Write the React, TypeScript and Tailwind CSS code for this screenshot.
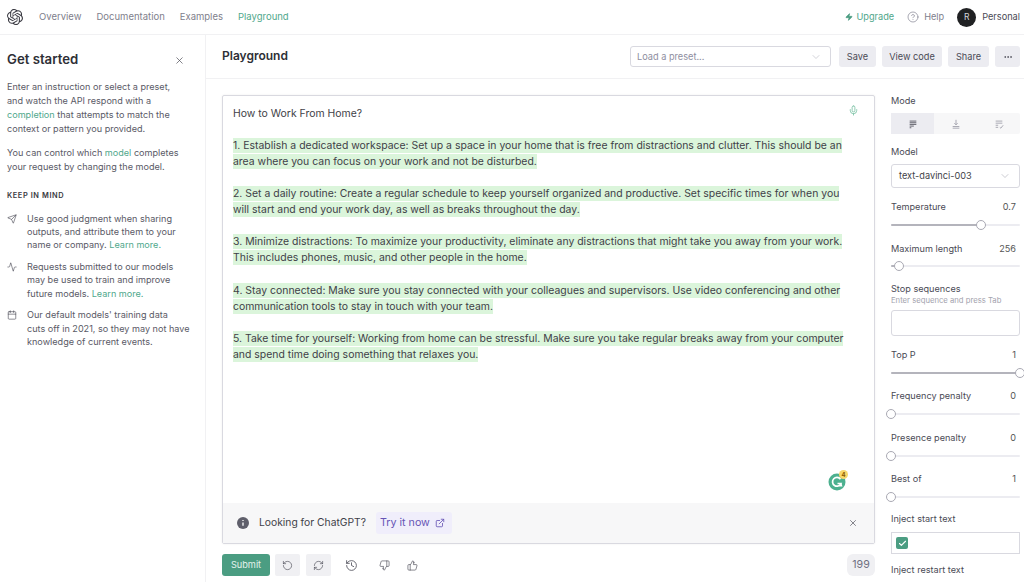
import React from "react";
import { X, Send, Activity, Calendar, ChevronDown, Mic, ExternalLink, RotateCcw, RefreshCw, History, ThumbsDown, ThumbsUp, Zap, CircleHelp, MoreHorizontal, Check } from "lucide-react";
import { SiOpenai } from "react-icons/si";

const paragraphs: string[][] = [
  ["1. Establish a dedicated workspace: Set up a space in your home that is free from distractions and clutter. This should be an", "area where you can focus on your work and not be disturbed."],
  ["2. Set a daily routine: Create a regular schedule to keep yourself organized and productive. Set specific times for when you", "will start and end your work day, as well as breaks throughout the day."],
  ["3. Minimize distractions: To maximize your productivity, eliminate any distractions that might take you away from your work.", "This includes phones, music, and other people in the home."],
  ["4. Stay connected: Make sure you stay connected with your colleagues and supervisors. Use video conferencing and other", "communication tools to stay in touch with your team."],
  ["5. Take time for yourself: Working from home can be stressful. Make sure you take regular breaks away from your computer", "and spend time doing something that relaxes you."],
];

function Slider({ label, value, pct }: { label: string; value: string; pct: number }) {
  return (
    <div className="h-[41.4px] shrink-0">
      <div className="flex justify-between h-[14px] items-center text-[9.15px] text-[#4a4a55]">
        <span>{label}</span>
        <span className="pr-[4px] text-[#555]">{value}</span>
      </div>
      <div className="relative h-[2px] mt-[10px] bg-[#ececf1] rounded-full">
        <div className="h-full bg-[#b4b4bc] rounded-full" style={{ width: `${pct}%` }} />
        <div className="absolute top-[-4px] w-[10px] h-[10px] rounded-full bg-white border border-[#a9a9b3]" style={{ left: `calc(${pct}% - 5px)` }} />
      </div>
    </div>
  );
}

function Bullet({ icon, children }: { icon: React.ReactNode; children: React.ReactNode }) {
  return (
    <div className="flex gap-[11px] mb-[8px]">
      <div className="w-[8px] pt-[2px] shrink-0 ml-[1px] text-[#4a4a55] -translate-x-[1px]">{icon}</div>
      <p className="text-[9.1px] leading-[13.4px] text-[#5a5a66] w-[168px]">{children}</p>
    </div>
  );
}

export default function App() {
  return (
    <div className="w-[1024px] h-[582px] overflow-hidden bg-white flex flex-col font-['Inter',sans-serif] text-[#353740]">
      <header className="h-[35px] shrink-0 border-b border-[#f1f1f3] flex items-center pl-[7px] pr-[4px]">
        <SiOpenai className="w-[16px] h-[16px] text-[#3a3a42]" />
        <nav className="flex gap-[15px] ml-[16px] text-[9.5px] text-[#80808c]">
          <span>Overview</span>
          <span>Documentation</span>
          <span>Examples</span>
          <span className="text-[#50a88c]">Playground</span>
        </nav>
        <div className="ml-auto flex items-center text-[9.2px]">
          <Zap className="w-[8px] h-[8px] text-[#4b9d82] fill-[#4b9d82]" />
          <span className="ml-[3px] text-[#4fa68a]">Upgrade</span>
          <CircleHelp strokeWidth={1.2} className="ml-[13px] w-[12px] h-[12px] text-[#6e6e80]" />
          <span className="ml-[5px] text-[#80808c]">Help</span>
          <div className="ml-[13px] w-[19px] h-[19px] rounded-full bg-[#202123] text-[#d5d5da] flex items-center justify-center text-[8.5px]">R</div>
          <span className="ml-[6px] text-[#4a4a55]">Personal</span>
        </div>
      </header>
      <div className="flex flex-1 min-h-0">
        <aside className="w-[206px] shrink-0 border-r border-[#f1f1f3] pl-[7px] pt-[16px] pr-[6px]">
          <div className="flex items-center justify-between h-[18px] pr-[14px]">
            <h2 className="text-[13.2px] font-semibold text-[#2e2f36]">Get started</h2>
            <X strokeWidth={1.5} className="w-[11px] h-[11px] text-[#4a4a55]" />
          </div>
          <p className="mt-[11px] w-[178px] text-[9.1px] leading-[14.1px] text-[#5a5a66]">
            Enter an instruction or select a preset, and watch the API respond with a <span className="text-[#50a88c]">completion</span> that attempts to match the context or pattern you provided.
          </p>
          <p className="mt-[10px] w-[178px] text-[9.1px] leading-[14.1px] text-[#5a5a66]">
            You can control which <span className="text-[#50a88c]">model</span> completes your request by changing the model.
          </p>
          <h3 className="mt-[15px] mb-[11px] text-[7.4px] font-semibold tracking-[0.08em] text-[#3a3a42]">KEEP IN MIND</h3>
          <Bullet icon={<Send strokeWidth={1.5} className="w-[10px] h-[10px]" />}>
            Use good judgment when sharing<br />outputs, and attribute them to your<br />name or company. <span className="text-[#50a88c]">Learn more.</span>
          </Bullet>
          <Bullet icon={<Activity strokeWidth={1.5} className="w-[10px] h-[10px]" />}>
            Requests submitted to our models<br />may be used to train and improve<br />future models. <span className="text-[#50a88c]">Learn more.</span>
          </Bullet>
          <Bullet icon={<Calendar strokeWidth={1.5} className="w-[10px] h-[10px]" />}>
            Our default models' training data<br />cuts off in 2021, so they may not have<br />knowledge of current events.
          </Bullet>
        </aside>
        <main className="flex-1 min-w-0 flex flex-col">
          <div className="h-[44px] shrink-0 border-b border-[#f1f1f3] flex items-center pl-[16px] pr-[4px]">
            <h1 className="text-[12px] font-semibold text-[#2e2f36] pb-[2px]">Playground</h1>
            <div className="ml-auto w-[201px] h-[21px] border border-[#d9d9e0] rounded-[3px] flex items-center justify-between pl-[6px] pr-[8px] text-[9.2px] text-[#8e8ea0]">
              <span>Load a preset...</span>
              <ChevronDown strokeWidth={1.2} className="w-[12px] h-[12px] text-[#b5b5c0]" />
            </div>
            <div className="ml-[8px] flex gap-[6px] text-[9.2px] text-[#4a4a55]">
              <span className="w-[37px] h-[21px] bg-[#ececf1] rounded-[3px] flex items-center justify-center">Save</span>
              <span className="w-[60px] h-[21px] bg-[#ececf1] rounded-[3px] flex items-center justify-center">View code</span>
              <span className="w-[41px] h-[21px] bg-[#ececf1] rounded-[3px] flex items-center justify-center">Share</span>
              <span className="w-[25px] h-[21px] bg-[#ececf1] rounded-[3px] flex items-center justify-center"><MoreHorizontal strokeWidth={2} className="w-[10px] h-[10px]" /></span>
            </div>
          </div>
          <div className="flex-1 min-h-0 flex pl-[16px] pt-[16px]">
            <div className="w-[653px] shrink-0 flex flex-col">
              <div className="relative h-[449px] shrink-0 border border-[#d9d9e0] rounded-[2px] flex flex-col shadow-[0_0_2px_rgba(0,0,0,0.08)]">
                <div className="flex-1 pt-[10px] pl-[10px] text-[10.45px] leading-[16.03px] text-[#3f3f48]">
                  <div>How to Work From Home?</div>
                  <div className="h-[16px]" />
                  {paragraphs.map((p, i) => (
                    <div key={i} className="mb-[16.1px]">
                      {p.map((line, j) => (
                        <div key={j}><span className="bg-[#dbf5db] py-[1px]">{line}</span></div>
                      ))}
                    </div>
                  ))}
                </div>
                <Mic strokeWidth={1.5} className="absolute top-[9px] right-[15px] w-[11px] h-[11px] text-[#5fb592]" />
                <svg viewBox="0 0 18 18" className="absolute left-[605px] top-[377px] w-[18px] h-[18px]">
                  <circle cx="9" cy="9" r="8.5" fill="#4cb08f" />
                  <path d="M12.5 6.2A4.4 4.4 0 1 0 13 10.5H9.5" fill="none" stroke="#fff" strokeWidth="1.7" />
                  <path d="M11 13.5l2.5-3 1 3z" fill="#fff" />
                </svg>
                <div className="absolute left-[616px] top-[374px] w-[9px] h-[9px] rounded-full bg-[#f6d76b] flex items-center justify-center text-[#8a5a00] text-[6px] font-bold">4</div>
                <div className="h-[40px] shrink-0 bg-[#f7f7f8] flex items-center pl-[14px] pr-[16px] text-[10.3px] text-[#3f3f48]">
                  <svg viewBox="0 0 12 12" className="w-[12px] h-[12px]">
                    <circle cx="6" cy="6" r="6" fill="#5f5f6b" />
                    <path d="M6 5.4v3.4M6 3.1v1" stroke="#fff" strokeWidth="1.3" />
                  </svg>
                  <span className="ml-[10px]">Looking for ChatGPT?</span>
                  <span className="ml-[10px] h-[22px] w-[76px] rounded-[3px] bg-[#f0eefb] text-[#6654b5] text-[10.7px] flex items-center pl-[4px] gap-[5px]">
                    Try it now <ExternalLink strokeWidth={2} className="w-[10px] h-[10px]" />
                  </span>
                  <X strokeWidth={1.6} className="ml-auto w-[10px] h-[10px] text-[#4a4a55]" />
                </div>
              </div>
              <div className="flex items-center mt-[10px] h-[22px] text-[#4a4a55]">
                <span className="w-[48px] h-[22px] rounded-[3px] bg-[#4b9d82] text-[#e4f2ed] text-[9.2px] flex items-center justify-center">Submit</span>
                <span className="ml-[5px] w-[25px] h-[22px] rounded-[2px] bg-[#f0f0f3] flex items-center justify-center"><RotateCcw strokeWidth={1.4} className="w-[11px] h-[11px]" /></span>
                <span className="ml-[6px] w-[25px] h-[22px] rounded-[2px] bg-[#f0f0f3] flex items-center justify-center"><RefreshCw strokeWidth={1.4} className="w-[11px] h-[11px]" /></span>
                <History strokeWidth={1.5} className="ml-[14px] w-[13px] h-[13px]" />
                <ThumbsDown strokeWidth={1.4} className="ml-[21px] w-[11px] h-[11px]" />
                <ThumbsUp strokeWidth={1.4} className="ml-[17px] w-[11px] h-[11px]" />
                <span className="ml-auto w-[28px] h-[22px] rounded-[6px] bg-[#f0f0f3] text-[10.6px] text-[#6e6e80] flex items-center justify-center">199</span>
              </div>
            </div>
            <div className="ml-[16px] w-[129px] shrink-0 flex flex-col -mt-[1px] text-[9.15px] text-[#4a4a55]">
              <div className="h-[14px] flex items-center">Mode</div>
              <div className="mt-[5px] h-[21px] flex bg-[#f7f7f8] rounded-[2px] shrink-0">
                <span className="w-[43px] bg-[#ececf1] flex items-center justify-center"><svg viewBox="0 0 12 12" className="w-[10px] h-[10px]" fill="none" stroke="#4a4a55" strokeWidth="1"><path d="M2 2.5h8M2 4.5h8M2 6.5h8M2 8.5h5M2 10.5h2" /></svg></span>
                <span className="w-[43px] flex items-center justify-center"><svg viewBox="0 0 12 12" className="w-[10px] h-[10px]" fill="none" stroke="#9a9aa6" strokeWidth="1"><path d="M6 1v6M4 5l2 2 2-2M2 9h8M2 11h8" /></svg></span>
                <span className="w-[43px] flex items-center justify-center"><svg viewBox="0 0 12 12" className="w-[10px] h-[10px]" fill="none" stroke="#9a9aa6" strokeWidth="1"><path d="M2 2.5h8M2 5h8M2 7.5h3M2 10h3M7 10l1.2 1L11 7.5" /></svg></span>
              </div>
              <div className="mt-[11px] h-[14px] flex items-center">Model</div>
              <div className="mt-[5px] h-[24px] shrink-0 border border-[#d9d9e0] rounded-[3px] flex items-center justify-between pl-[7px] pr-[8px] text-[9.2px] text-[#3f3f48]">
                <span>text-davinci-003</span>
                <ChevronDown strokeWidth={1.2} className="w-[12px] h-[12px] text-[#a9a9b3]" />
              </div>
              <div className="mt-[12px] flex flex-col">
                <Slider label="Temperature" value="0.7" pct={70} />
                <Slider label="Maximum length" value="256" pct={6} />
              </div>
              <div className="h-[14px] flex items-center mt-[-1px]">Stop sequences</div>
              <div className="text-[7.7px] text-[#a3a3ae] h-[10px] flex items-center">Enter sequence and press Tab</div>
              <div className="mt-[4px] h-[26px] shrink-0 border border-[#d9d9e0] rounded-[3px]" />
              <div className="mt-[12px] flex flex-col">
                <Slider label="Top P" value="1" pct={100} />
                <Slider label="Frequency penalty" value="0" pct={0} />
                <Slider label="Presence penalty" value="0" pct={0} />
                <Slider label="Best of" value="1" pct={0} />
              </div>
              <div className="h-[14px] flex items-center mt-[-1px]">Inject start text</div>
              <div className="mt-[6px] h-[22px] shrink-0 border border-[#d9d9e0] flex items-center pl-[4px]">
                <span className="w-[12px] h-[12px] rounded-[2px] bg-[#4b9d82] flex items-center justify-center"><Check strokeWidth={3} className="w-[9px] h-[9px] text-white" /></span>
              </div>
              <div className="mt-[9px] h-[14px] flex items-center">Inject restart text</div>
            </div>
          </div>
        </main>
      </div>
    </div>
  );
}
